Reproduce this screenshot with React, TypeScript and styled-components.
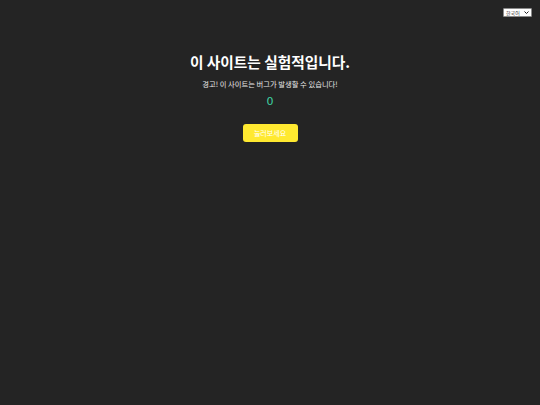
import * as React from "react";
import styled, { createGlobalStyle } from "styled-components";

const GlobalStyle = createGlobalStyle`
  html, body {
    margin: 0;
    padding: 0;
    background: #242424;
  }
  body {
    font-family: "Noto Sans CJK KR", "Noto Sans", sans-serif;
    color: #ffffff;
  }
`;

const Page = styled.div`
  min-height: 405px;
  display: flex;
  flex-direction: column;
`;

const TopBar = styled.div`
  display: flex;
  justify-content: flex-end;
  padding: 8px 8px 0 0;
`;

const SelectWrap = styled.div`
  position: relative;
  width: 29px;
  height: 9px;

  svg {
    position: absolute;
    right: 3px;
    top: 3px;
    pointer-events: none;
  }
`;

const LangSelect = styled.select`
  appearance: none;
  box-sizing: border-box;
  display: block;
  font-family: "Noto Sans CJK KR", sans-serif;
  font-size: 5px;
  line-height: 7px;
  height: 9px;
  width: 29px;
  padding: 0 0 0 2px;
  margin: 0;
  border: 1px solid #8a8a8a;
  border-radius: 1px;
  background: #ffffff;
  color: #333;
  outline: none;
`;

const Main = styled.main`
  display: flex;
  flex-direction: column;
  align-items: center;
  padding-top: 33px;
`;

const Title = styled.h1`
  margin: 0;
  font-size: 14.7px;
  font-weight: 700;
  line-height: 24px;
`;

const Warning = styled.p`
  margin: 5px 0 0;
  font-size: 7.3px;
  line-height: 10px;
  color: #e8e8e8;
`;

const Counter = styled.div`
  margin-top: 6px;
  font-family: "DejaVu Sans", sans-serif;
  font-size: 11px;
  line-height: 14px;
  color: #3ed3a3;
`;

const PushButton = styled.button`
  margin-top: 15px;
  width: 55px;
  height: 18px;
  border: none;
  border-radius: 3px;
  background: #ffe930;
  color: #ffffff;
  font-family: "Noto Sans CJK KR", sans-serif;
  font-size: 7px;
  padding: 0;
`;

export default function App() {
  const [count, setCount] = React.useState(0);
  return (
    <Page>
      <GlobalStyle />
      <TopBar>
        <SelectWrap>
          <LangSelect defaultValue="ko">
            <option value="ko">한국어</option>
            <option value="en">English</option>
          </LangSelect>
          <svg width="5" height="3" viewBox="0 0 5 3">
            <path d="M0.5 0.5 L2.5 2.5 L4.5 0.5" fill="none" stroke="#222" strokeWidth="1" />
          </svg>
        </SelectWrap>
      </TopBar>
      <Main>
        <Title>이 사이트는 실험적입니다.</Title>
        <Warning>경고! 이 사이트는 버그가 발생할 수 있습니다!</Warning>
        <Counter>{count}</Counter>
        <PushButton onClick={() => setCount(count + 1)}>눌러보세요</PushButton>
      </Main>
    </Page>
  );
}
